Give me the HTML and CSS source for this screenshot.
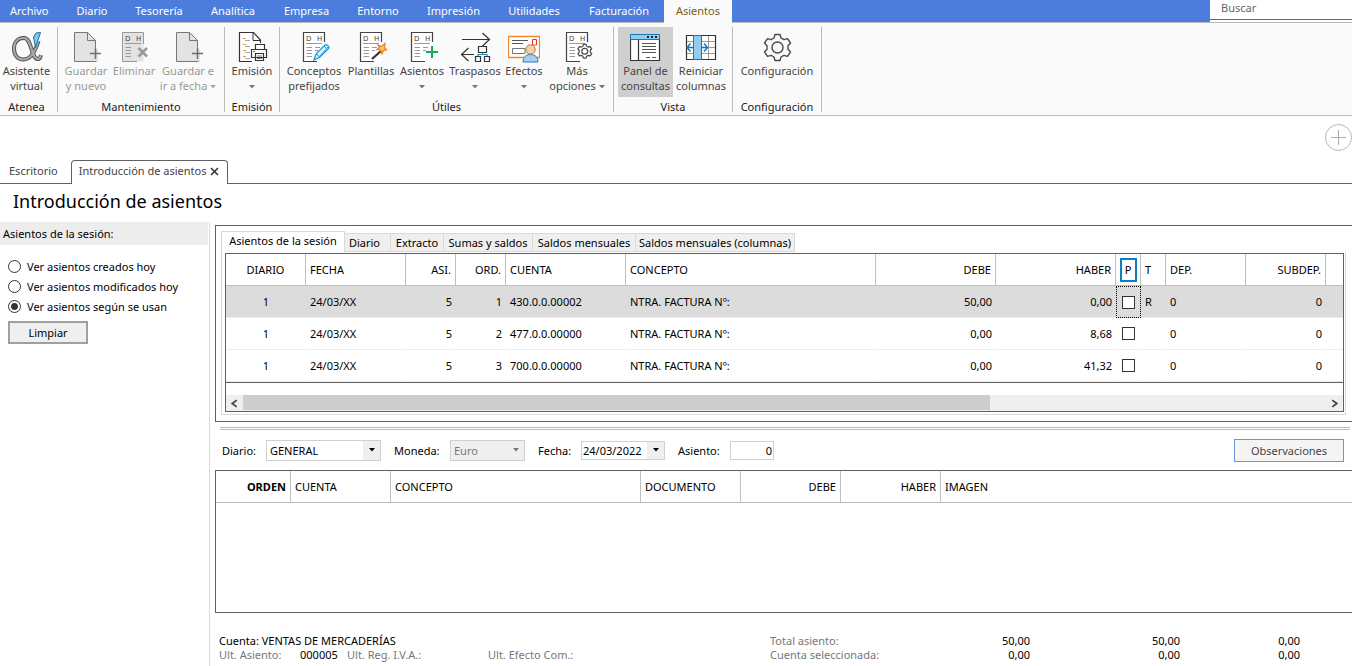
FILE: index.html
```html
<!DOCTYPE html>
<html lang="es">
<head>
<meta charset="utf-8">
<title>Introducción de asientos</title>
<link rel="stylesheet" href="styles.css">
</head>
<body>
<svg class="defs" aria-hidden="true">
  <symbol id="page-plus" viewBox="0 0 32 32">
    <path d="M4.500 1.500H18.500L25.500 8.500V18H28V30.500H4.500Z" fill="#e3e3e3"/>
    <path d="M25.500 17V9.500L17.500 1.500H4.500V30.500H26.500M17.500 1.500V9.500H25.500" fill="none" stroke="#777"/>
    <path d="M25.500 17V28M20 22.500H31" stroke="#6f6f6f" stroke-width="1.500"/>
  </symbol>
  <symbol id="ledger" viewBox="0 0 32 32">
    <path d="M5.500 1.500H26.500V14V30.500H5.500Z" fill="#fff"/>
    <path d="M26.500 11V1.500H5.500V30.500H19" fill="none" stroke="#444" stroke-width="1.200"/>
    <path d="M8 12.500H24M8.500 16.500H14M8.500 19.500H14M8.500 22.500H14M8.500 25.500H14M17 16.500H22M17 19.500H20" stroke="#999" fill="none"/>
  </symbol>
  <symbol id="arrow" viewBox="0 0 6 4"><path d="M0 0H6L3 3.500Z" fill="currentColor"/></symbol>
  <symbol id="gear" viewBox="0 0 32 32">
    <path d="M13 6L14 2.500H19L20 6L23 7.700L26.500 6.700L29.500 11L27 13.700V17.300L29.500 20L26.500 24.300L23 23.300L20 25L19 28.500H14L13 25L10 23.300L6.500 24.300L3.500 20L6 17.300V13.700L3.500 11L6.500 6.700L10 7.700Z" stroke="#4a4a4a" stroke-linejoin="round"/>
    <circle cx="16.500" cy="15.500" r="5.500" stroke="#4a4a4a"/>
  </symbol>
</svg>

<nav class="menu">
  <div class="menu-items">
    <a href="#">Archivo</a><a href="#">Diario</a><a href="#">Tesorería</a><a href="#">Analítica</a><a href="#">Empresa</a><a href="#">Entorno</a><a href="#">Impresión</a><a href="#">Utilidades</a><a href="#">Facturación</a><a href="#" class="active">Asientos</a>
  </div>
  <input class="search" type="text" placeholder="Buscar" aria-label="Buscar">
</nav>

<header class="ribbon">
  <section class="group g-atenea">
    <div class="tools">
      <button class="tool"><svg class="icon" viewBox="0 0 32 32"><path d="M27.500 10C25 18 21 28.500 12.500 28.500C6.500 28.500 3 24 3 17.500C3 11 7 7 13 7C21 7 20 28.500 27 28C28.500 28 29.500 26 30 24" fill="none" stroke="#4d4d4d" stroke-width="4"/><path d="M27.500 10C25 18 21 28.500 12.500 28.500C6.500 28.500 3 24 3 17.500C3 11 7 7 13 7C21 7 20 28.500 27 28C28.500 28 29.500 26 30 24" fill="none" stroke="#aaa" stroke-width="2.200"/><path d="M22.500 6L25 2L29.500 1.500L24.500 16.500Z" fill="#84c5ec" stroke="#1673a8"/></svg><span>Asistente<br>virtual</span></button>
    </div>
    <h2>Atenea</h2>
  </section>
  <section class="group g-mant">
    <div class="tools">
      <button class="tool" disabled><svg class="icon"><use href="#page-plus"/></svg><span>Guardar<br>y nuevo</span></button>
      <button class="tool" disabled><svg class="icon" viewBox="0 0 32 32"><path d="M4.500 1.500H25.500V30.500H4.500Z" fill="#e3e3e3"/><path d="M25.500 13V1.500H4.500V30.500H19" fill="none" stroke="#999"/><text x="7" y="10" class="dh">D</text><text x="18" y="10" class="dh">H</text><path d="M7 12.500H23M7.500 16.500H13M7.500 19.500H13M7.500 22.500H13M7.500 25.500H13" stroke="#999"/><path d="M20.500 17L29 25.500M29 17L20.500 25.500" stroke="#999" stroke-width="2.500"/></svg><span>Eliminar</span></button>
      <button class="tool" disabled><svg class="icon"><use href="#page-plus"/></svg><span>Guardar e<br>ir a fecha <svg class="caret"><use href="#arrow"/></svg></span></button>
    </div>
    <h2>Mantenimiento</h2>
  </section>
  <section class="group g-emision">
    <div class="tools">
      <button class="tool"><svg class="icon" viewBox="0 0 32 32"><path d="M24.500 12V9L17.500 1.500H3.500V30.500H16" fill="#fff" stroke="#333" stroke-width="1.200"/><path d="M17 2V9.500H24.500" fill="none" stroke="#333"/><path d="M7 7.500H10M7 13.500H10M7 19.500H10M7 25.500H10" stroke="#e89a1c"/><path d="M9 9.500H14M9 15.500H14M9 21.500H14M9 27.500H14" stroke="#aaa"/><path d="M19.500 18V13.500H28.500V18M15.500 18.500H30.500V26.500H15.500ZM19.500 22.500H27.500V29.500H19.500Z" fill="#fff" stroke="#333" stroke-width="1.200"/><path d="M21 25H26M21 27.500H26" stroke="#777"/><path d="M17 20.500H19" stroke="#1b83c5"/></svg><span>Emisión<br><svg class="caret"><use href="#arrow"/></svg></span></button>
    </div>
    <h2>Emisión</h2>
  </section>
  <section class="group g-utiles">
    <div class="tools">
      <button class="tool"><svg class="icon" viewBox="0 0 32 32"><use href="#ledger" width="32" height="32"/><text x="8" y="10" class="dh">D</text><text x="19" y="10" class="dh">H</text><path d="M16 29L18 23L27 14C28 13 32 15 30.500 17.500L22 26Z" fill="#dff3fc" stroke="#189bd7" stroke-width="1.300"/><path d="M21 26L30 16M18 23L22 26M26 15L29 18" stroke="#189bd7"/></svg><span>Conceptos<br>prefijados</span></button>
      <button class="tool"><svg class="icon" viewBox="0 0 32 32"><use href="#ledger" width="32" height="32"/><text x="8" y="10" class="dh">D</text><text x="19" y="10" class="dh">H</text><path d="M17 28L26 20" stroke="#333" stroke-width="2.200"/><path d="M23 14L26.500 15.500L30 12.500L29.500 17L32 19L28.500 19.500L27 23L25.500 19L22 18.500L24.500 16.500Z" fill="#ffc65c" stroke="#ef7b24" stroke-width="1.200"/></svg><span>Plantillas</span></button>
      <button class="tool"><svg class="icon" viewBox="0 0 32 32"><use href="#ledger" width="32" height="32"/><text x="8" y="10" class="dh">D</text><text x="19" y="10" class="dh">H</text><path d="M26 15V27M20 21H32" stroke="#1aab54" stroke-width="2"/></svg><span>Asientos<br><svg class="caret"><use href="#arrow"/></svg></span></button>
      <button class="tool"><svg class="icon" viewBox="0 0 32 32"><g fill="none" stroke="#333" stroke-width="1.200"><path d="M3 8.500H30M23.500 2L30.500 8.500L23.500 15M15 23.500H3M9.500 17L2.500 23.500L9.500 30M19.500 15.500H27.500V21.500H19.500ZM16.500 25.500H21.500V30.500H16.500ZM25.500 25.500H30.500V30.500H25.500Z"/><path d="M19 25V23.500H28V25M23.500 22V24" stroke="#178ed1"/></g></svg><span>Traspasos<br><svg class="caret"><use href="#arrow"/></svg></span></button>
      <button class="tool"><svg class="icon" viewBox="0 0 32 32"><path d="M.500 5.500H31.500V26.500H.500Z" fill="#fff" stroke="#f08a2c" stroke-width="1.300"/><path d="M4 9.500H20M4 12.500H15" stroke="#555"/><path d="M4.500 17.500H17V22.500H4.500Z" fill="none" stroke="#777"/><path d="M24.500 8.500H28.500V14H24.500Z" fill="#fff" stroke="#e53935"/><path d="M15 31C15 26 18 23.500 22.500 23.500S30 26 30 31Z" fill="#a6d0ef" stroke="#2b7db8"/><circle cx="22.500" cy="18.500" r="4.700" fill="#f9cfa5" stroke="#b1753a"/></svg><span>Efectos<br><svg class="caret"><use href="#arrow"/></svg></span></button>
      <button class="tool"><svg class="icon" viewBox="0 0 32 32"><use href="#ledger" width="32" height="32"/><text x="8" y="10" class="dh">D</text><text x="19" y="10" class="dh">H</text><use href="#gear" x="15" y="12" width="17" height="17" fill="#fff" stroke-width="2.300"/></svg><span>Más<br>opciones <svg class="caret"><use href="#arrow"/></svg></span></button>
    </div>
    <h2>Útiles</h2>
  </section>
  <section class="group g-vista">
    <div class="tools">
      <button class="tool pressed"><svg class="icon" viewBox="0 0 32 32"><path d="M.500 3.500H29.500V29.500H.500Z" fill="#fff"/><path d="M.500 3.500H29.500V8.500H.500Z" fill="#91cdf2" stroke="#1678b3"/><path d="M.500 8.500V29.500H29.500V8.500M8.500 9V29" fill="none" stroke="#333" stroke-width="1.200"/><path d="M17 6H19M21 6H23M25 6H27" stroke="#222" stroke-width="2"/><path d="M12 12.500H26M12 15.500H26M12 18.500H26M12 21.500H26M16 26.500H20M22 26.500H26" stroke="#555"/></svg><span>Panel de<br>consultas</span></button>
      <button class="tool"><svg class="icon" viewBox="0 0 32 32"><path d="M1.500 4.500H30.500V28.500H1.500Z" fill="#fff" stroke="#333" stroke-width="1.200"/><path d="M2 10.500H30M2 16.500H30M2 22.500H30M23.500 5V28" stroke="#999"/><path d="M8.500 4.500H16.500V28.500H8.500Z" fill="#91cdf2" stroke="#1678b3"/><path d="M8 16.500H2M5.500 12.500L2 16.500L5.500 20.500M16 16.500H22.500M19 12.500L22.500 16.500L19 20.500" fill="none" stroke="#1678b3" stroke-width="1.500"/></svg><span>Reiniciar<br>columnas</span></button>
    </div>
    <h2>Vista</h2>
  </section>
  <section class="group g-config">
    <div class="tools">
      <button class="tool"><svg class="icon" viewBox="0 0 32 32" fill="none" stroke-width="1.400"><use href="#gear" y="1" width="32" height="32"/></svg><span>Configuración</span></button>
    </div>
    <h2>Configuración</h2>
  </section>
</header>

<div class="tabstrip">
  <a href="#" class="doc-tab">Escritorio</a>
  <div class="doc-tab current">Introducción de asientos <button class="close" aria-label="Cerrar"><svg viewBox="0 0 9 9"><path d="M1 1L8 8M8 1L1 8" stroke="#333" stroke-width="1.600"/></svg></button></div>
  <div class="strip-rest"><button class="add" aria-label="Añadir"><svg viewBox="0 0 28 28"><circle cx="14.500" cy="14.500" r="13" fill="none" stroke="#b5b5b5"/><path d="M14.500 7V22M7 14.500H22" stroke="#aaa"/></svg></button></div>
</div>

<h1>Introducción de asientos</h1>

<div class="workspace">
  <aside class="sidebar">
    <h3>Asientos de la sesión:</h3>
    <div class="options">
      <label><input type="radio" name="ver">Ver asientos creados hoy</label>
      <label><input type="radio" name="ver">Ver asientos modificados hoy</label>
      <label><input type="radio" name="ver" checked>Ver asientos según se usan</label>
    </div>
    <button class="clear">Limpiar</button>
  </aside>

  <main>
    <section class="panel">
      <div class="tabs">
        <button class="selected">Asientos de la sesión</button><button class="t-diario">Diario</button><button class="t-extracto">Extracto</button><button class="t-sumas">Sumas y saldos</button><button class="t-mens">Saldos mensuales</button><button class="t-col">Saldos mensuales (columnas)</button>
      </div>
      <div class="frame">
        <div class="grid-box">
          <table class="session">
            <colgroup><col class="c-80"><col class="c-100"><col class="c-50"><col class="c-50"><col class="c-120"><col class="c-250"><col class="c-120"><col class="c-120"><col class="c-25"><col class="c-25"><col class="c-80"><col class="c-80"><col></colgroup>
            <thead><tr><th class="mid">DIARIO</th><th>FECHA</th><th class="num">ASI.</th><th class="num">ORD.</th><th>CUENTA</th><th>CONCEPTO</th><th class="num">DEBE</th><th class="num">HABER</th><th class="mark"><span>P</span></th><th>T</th><th>DEP.</th><th class="num">SUBDEP.</th><th></th></tr></thead>
            <tbody>
              <tr class="sel"><td class="mid">1</td><td>24/03/XX</td><td class="num">5</td><td class="num">1</td><td>430.0.0.00002</td><td>NTRA. FACTURA Nº:</td><td class="num">50,00</td><td class="num">0,00</td><td class="mark focus"><input type="checkbox" aria-label="P"></td><td>R</td><td>0</td><td class="num">0</td><td></td></tr>
              <tr><td class="mid">1</td><td>24/03/XX</td><td class="num">5</td><td class="num">2</td><td>477.0.0.00000</td><td>NTRA. FACTURA Nº:</td><td class="num">0,00</td><td class="num">8,68</td><td class="mark"><input type="checkbox" aria-label="P"></td><td></td><td>0</td><td class="num">0</td><td></td></tr>
              <tr><td class="mid">1</td><td>24/03/XX</td><td class="num">5</td><td class="num">3</td><td>700.0.0.00000</td><td>NTRA. FACTURA Nº:</td><td class="num">0,00</td><td class="num">41,32</td><td class="mark"><input type="checkbox" aria-label="P"></td><td></td><td>0</td><td class="num">0</td><td></td></tr>
            </tbody>
          </table>
          <div class="scrollbar">
            <button aria-label="Izquierda"><svg viewBox="0 0 8 8"><path d="M6 1L2 4L6 7" fill="none" stroke="#444" stroke-width="1.600"/></svg></button>
            <div class="track"><div class="thumb"></div></div>
            <button aria-label="Derecha"><svg viewBox="0 0 8 8"><path d="M2 1L6 4L2 7" fill="none" stroke="#444" stroke-width="1.600"/></svg></button>
          </div>
        </div>
      </div>
    </section>

    <div class="splitter"></div>

    <form class="entry">
      <label for="diario" class="l-diario">Diario:</label>
      <div class="combo w-diario"><select id="diario"><option>GENERAL</option></select><span class="drop"><svg class="caret"><use href="#arrow"/></svg></span></div>
      <label for="moneda" class="l-moneda">Moneda:</label>
      <div class="combo w-moneda off"><select id="moneda" disabled><option>Euro</option></select><span class="drop"><svg class="caret"><use href="#arrow"/></svg></span></div>
      <label for="fecha" class="l-fecha">Fecha:</label>
      <div class="combo w-fecha"><input id="fecha" type="text" value="24/03/2022"><button type="button" class="drop" aria-label="Abrir calendario"><svg class="caret"><use href="#arrow"/></svg></button></div>
      <label for="asiento" class="l-asiento">Asiento:</label>
      <input id="asiento" class="asiento" type="text" value="0">
      <button type="button" class="notes">Observaciones</button>
    </form>

    <section class="lines">
      <table>
        <colgroup><col class="c-75"><col class="c-100"><col class="c-250"><col class="c-100"><col class="c-100"><col class="c-100"><col></colgroup>
        <thead><tr><th class="num strong">ORDEN</th><th>CUENTA</th><th>CONCEPTO</th><th>DOCUMENTO</th><th class="num">DEBE</th><th class="num">HABER</th><th>IMAGEN</th></tr></thead>
      </table>
    </section>

    <footer class="status">
      <div class="account">
        <p class="dark">Cuenta: VENTAS DE MERCADERÍAS</p>
        <p class="last"><span>Ult. Asiento:</span><span class="dark">000005</span><span>Ult. Reg. I.V.A.:</span><span>Ult. Efecto Com.:</span></p>
      </div>
      <div class="totals">
        <span>Total asiento:</span><b>50,00</b><b>50,00</b><b>0,00</b>
        <span>Cuenta seleccionada:</span><b>0,00</b><b>0,00</b><b>0,00</b>
      </div>
    </footer>
  </main>
</div>
</body>
</html>
```
FILE: styles.css
```css
* { box-sizing: border-box; }
body {
  margin: 0;
  min-height: 100vh;
  display: flex;
  flex-direction: column;
  background: #fff;
  color: #000;
  font: 11px/15px "Noto Sans", "Open Sans", sans-serif;
  overflow-x: hidden;
}
button, input, select { font: inherit; color: inherit; margin: 0; padding: 0; }
button { border: 0; background: none; }
a { color: inherit; text-decoration: none; }
h1, h2, h3, p { margin: 0; font-weight: 400; }
.defs { position: absolute; width: 0; height: 0; }
.caret { width: 6px; height: 4px; vertical-align: 1px; }
.dh { font: 7px "DejaVu Sans", sans-serif; fill: #444; }

/* menu bar */
.menu { display: flex; justify-content: space-between; height: 23px; background: #4c7cdc; border-bottom: 1px solid #bcbcbc; }
.menu-items { display: grid; grid-template-columns: 62px 60px 74px 74px 73px 70px 81px 80px 90px 68px; }
.menu a { color: #fff; text-align: center; line-height: 22px; }
.menu a:first-child { text-align: left; padding-left: 10px; }
.menu a.active { height: 23px; background: #fafafa; color: #7d5a10; }
.search { width: 142px; height: 20px; padding: 0 11px 4px; border: 0; border-bottom: 1px solid #666; background: #fff; box-shadow: 0 2px #fff; outline: 0; }
.search::placeholder { color: #666; opacity: 1; }

/* ribbon */
.ribbon { display: flex; height: 93px; padding: 4px 0 3px; background: #fafafa; border-bottom: 1px solid #bcbcbc; color: #444; }
.group { display: flex; flex-direction: column; justify-content: space-between; border-right: 1px solid #bcbcbc; }
.group h2 { font-size: 11px; line-height: 10px; text-align: center; color: #222; }
.tools { display: grid; }
.tool { display: flex; flex-direction: column; align-items: center; height: 70px; padding-top: 4px; white-space: nowrap; }
.tool:disabled { color: #999; }
.tool .caret { color: #777; }
.tool:disabled .caret { color: #aaa; }
.icon { width: 32px; height: 32px; flex: none; }
.pressed { background: #cfcfcf; }
.g-atenea { width: 58px; padding-right: 4px; }
.g-mant { width: 167px; }
.g-mant .tools { grid-template-columns: 56px 40px 68px; }
.g-emision { width: 55px; }
.g-utiles { width: 334px; }
.g-utiles .tools { grid-template-columns: 60px 54px 48px 58px 40px 66px; padding-left: 4px; }
.g-vista { width: 119px; }
.g-vista .tools { grid-template-columns: 55px 56px; padding-left: 4px; }
.g-config { width: 89px; }

/* document tabs */
.tabstrip { display: flex; align-items: flex-end; height: 68px; color: #444; }
.doc-tab { height: 24px; padding: 0 13px 0 9px; line-height: 22px; border-bottom: 1px solid #606060; }
.doc-tab.current { display: flex; gap: 4px; padding: 0 8px 0 7px; border: 1px solid #606060; border-bottom: 0; border-radius: 4px 4px 0 0; line-height: 20px; }
.close { width: 9px; height: 21px; line-height: 0; }
.close svg { width: 9px; height: 9px; }
.strip-rest { flex: 1; display: flex; justify-content: flex-end; align-items: flex-start; height: 61px; border-bottom: 1px solid #606060; }
.add { width: 28px; height: 28px; }

h1 { padding: 0 13px; height: 38px; font-size: 18px; line-height: 35px; }

.workspace { flex: 1; display: flex; }
.sidebar { width: 210px; border-right: 1px solid #dadada; flex: none; }
.sidebar h3 { margin-right: 1px; padding: 0 3px; font-size: 11px; line-height: 23px; background: #ededed; }
.options { padding: 11px 8px 5px; }
.options label { display: flex; align-items: center; gap: 6px; height: 20px; white-space: nowrap; }
.options input { appearance: none; width: 13px; height: 13px; border: 1px solid #333; border-radius: 50%; background: #fff; }
.options input:checked { background: radial-gradient(circle, #333 0 3px, #fff 4px); }
.clear { width: 80px; height: 23px; margin-left: 8px; border: 2px solid #a0a0a0; background: #efefef; }

main { flex: 1; min-width: 0; padding: 3px 0 0 5px; }
.panel { border: 1px solid #606060; border-right: 0; padding: 5px 6px 6px 5px; }
.tabs { display: flex; align-items: flex-end; height: 21px; }
.tabs button { height: 19px; background: #efefef; border: 1px solid #d9d9d9; border-left: 0; white-space: nowrap; text-align: center; }
.tabs .selected { height: 21px; width: 124px; padding-bottom: 3px; background: #fff; border-left: 1px solid #d9d9d9; border-bottom: 0; }
.tabs .t-diario { width: 46px; padding-right: 6px; }
.tabs .t-extracto { width: 53px; }
.tabs .t-sumas { width: 89px; }
.tabs .t-mens { width: 103px; }
.tabs .t-col { width: 159px; }
.frame { border: 1px solid #d9d9d9; border-top: 0; padding: 1px 1px 2px 3px; }
.grid-box { border: 1px solid #606060; }

table { width: 100%; border-collapse: separate; border-spacing: 0; table-layout: fixed; font-size: 11px; }
th, td { height: 32px; padding: 0 4px; text-align: left; font-weight: 400; white-space: nowrap; border-bottom: 1px solid #ededed; }
th { border-bottom-color: #bfbfbf; border-right: 1px solid #bfbfbf; }
th:last-child { border-right: 0; }
td { border-right: 1px solid transparent; padding-right: 3px; }
.num { text-align: right; }
.mid { text-align: center; }
.strong { font-weight: 700; }
.sel td { background: #dcdcdc; }
.session { border-bottom: 1px solid #606060; }
.mark { padding: 0; text-align: center; }
.mark span { display: inline-block; width: 17px; border: 2px solid #0c7fc4; line-height: 20px; }
.mark input { appearance: none; display: block; margin: 0 auto; width: 13px; height: 13px; border: 1px solid #333; background: #fff; }
.sel .focus { border: 1px dotted #000; }
.c-25 { width: 25px; } .c-50 { width: 50px; } .c-75 { width: 75px; } .c-80 { width: 80px; }
.c-100 { width: 100px; } .c-120 { width: 120px; } .c-250 { width: 250px; }

.scrollbar { display: flex; height: 16px; margin-top: 12px; background: #efefef; }
.scrollbar button { width: 17px; line-height: 0; }
.scrollbar svg { width: 9px; height: 9px; }
.track { flex: 1; }
.thumb { width: 69%; height: 15px; background: #cdcdcd; }

.splitter { height: 3px; margin: 5px 2px 8px 5px; border: 1px solid #bcbcbc; border-width: 1px 0; }

/* entry header */
.entry { display: flex; align-items: center; height: 24px; padding-right: 8px; padding-left: 7px; }
.combo { display: flex; height: 21px; border: 1px solid #d0d0d0; background: #fff; position: relative; }
.combo select { appearance: none; flex: 1; border: 0; padding-left: 3px; background: transparent; opacity: 1; }
.combo input { flex: 1; min-width: 0; border: 0; padding-left: 1px; background: transparent; }
.drop { display: flex; align-items: center; justify-content: center; width: 17px; background: #efefef; }
span.drop { position: absolute; right: 0; top: 0; bottom: 0; pointer-events: none; }
.off { background: #efefef; color: #777; }
.l-diario { width: 44px; }
.l-moneda, .l-fecha, .l-asiento { padding-left: 13px; }
.l-moneda { width: 69px; }
.l-fecha { width: 56px; }
.l-asiento { width: 65px; }
.w-diario { width: 115px; }
.w-moneda { width: 75px; }
.w-fecha, .asiento { height: 19px; }
.w-fecha { width: 84px; }
.asiento { width: 44px; padding-right: 1px; border: 1px solid #d0d0d0; text-align: right; }
.notes { width: 110px; height: 23px; margin-left: auto; border: 1px solid #6e94e0; background: #f4f4f4; color: #444; }

.lines { margin-top: 8px; min-height: 143px; border: 1px solid #606060; border-right: 0; }

.status { display: flex; padding: 21px 52px 3px 4px; line-height: 14px; color: #777; white-space: nowrap; }
.account { width: 551px; }
.dark { color: #000; }
.last { display: grid; grid-template-columns: 81px 47px 141px auto; }
.totals { display: grid; grid-template-columns: 170px 90px 150px 120px; }
.totals b { font-weight: 400; color: #000; text-align: right; }
```
